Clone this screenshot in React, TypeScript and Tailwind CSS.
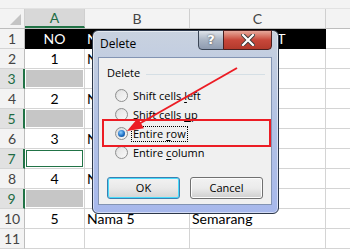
import React from "react";

type Row = { n: number; a?: string; b?: string; c?: string; kind?: "head" | "gray" | "active" | "plain" };

const rows: Row[] = [
  { n: 1, a: "NO", b: "NAMA", c: "ALAMAT", kind: "head" },
  { n: 2, a: "1", b: "Nama 1", c: "Jakarta" },
  { n: 3, kind: "gray" },
  { n: 4, a: "2", b: "Nama 2", c: "Bandung" },
  { n: 5, kind: "gray" },
  { n: 6, a: "3", b: "Nama 3", c: "Surabaya" },
  { n: 7, kind: "active" },
  { n: 8, a: "4", b: "Nama 4", c: "Malang" },
  { n: 9, kind: "gray" },
  { n: 10, a: "5", b: "Nama 5", c: "Semarang" },
  { n: 11, kind: "plain" },
];

function Radio({ checked }: { checked?: boolean }) {
  return (
    <div className="w-[13px] h-[13px] rounded-full border border-[#8e8f8f] bg-gradient-to-br from-[#d8d8d8] to-[#fbfbfb] flex items-center justify-center shrink-0">
      {checked ? (
        <div className="w-[7px] h-[7px] rounded-full bg-[radial-gradient(circle_at_40%_35%,#8fd0ff,#1f6fc4_55%,#0b3c7a)]" />
      ) : (
        <div className="w-[9px] h-[9px] rounded-full bg-gradient-to-br from-[#e4e4e4] to-[#f7f7f7]" />
      )}
    </div>
  );
}

function RadioRow({ children, checked, focus }: { children: React.ReactNode; checked?: boolean; focus?: boolean }) {
  return (
    <div className="flex items-center h-[19px] pl-[16px]">
      <Radio checked={checked} />
      <div className={`ml-[3px] px-[1px] leading-[14px] ${focus ? "border border-dotted border-black" : "border border-transparent"}`}>{children}</div>
    </div>
  );
}

export default function App() {
  return (
    <div className="relative w-[350px] h-[250px] overflow-hidden bg-white font-['Lato',sans-serif] text-[14px] text-black">
      <div className="h-[9px] bg-[#f3f3f3] border-b border-[#e2e2e2]" />
      {/* column header */}
      <div className="flex h-[20px] bg-[#f3f3f3] text-[14px] text-[#444] border-b border-[#bdbdbd]">
        <div className="relative w-[25px] border-r border-[#cfcfcf]">
          <div className="absolute right-[3px] bottom-[3px] w-0 h-0 border-l-[11px] border-l-transparent border-b-[11px] border-b-[#c4c4c4]" />
        </div>
        <div className="w-[60px] flex items-center justify-center bg-[#d8d8d8] text-[#1e6b44] border-b-2 border-[#217346] border-r border-r-[#cfcfcf]">A</div>
        <div className="w-[105px] flex items-center justify-center border-r border-[#cfcfcf]">B</div>
        <div className="w-[136px] flex items-center justify-center border-r border-[#cfcfcf]">C</div>
        <div className="flex-1" />
      </div>
      {rows.map((r) => {
        const sel = r.kind === "gray" || r.kind === "active";
        const head = r.kind === "head";
        return (
          <div key={r.n} className="flex h-[20px]">
            <div
              className={`w-[25px] flex items-center justify-center text-[14px] border-b border-[#d4d4d4] ${
                sel ? "bg-[#e1e1e1] text-[#1e6b44] border-r-2 border-r-[#217346]" : "bg-[#f3f3f3] text-[#444] border-r border-r-[#bdbdbd]"
              }`}
            >
              {r.n}
            </div>
            <div className={`w-[60px] flex items-center justify-center border-r border-b border-[#d4d4d4] ${head ? "bg-black text-white border-black" : ""}`}>
              {r.kind === "gray" ? (
                <div className="w-full h-full p-[1px] pr-[1px]">
                  <div className="w-full h-full bg-[#c6c6c6]" />
                </div>
              ) : r.kind === "active" ? (
                <div className="w-full h-full p-[1px]">
                  <div className="w-full h-full border border-[#217346]" />
                </div>
              ) : (
                r.a
              )}
            </div>
            <div className={`w-[105px] flex items-center pl-[2px] border-r border-b border-[#d4d4d4] ${head ? "bg-black text-white border-black" : ""}`}>{r.b}</div>
            <div className={`w-[136px] flex items-center border-r border-b border-[#d4d4d4] ${head ? "bg-black text-white border-black justify-center" : "pl-[2px]"}`}>{r.c}</div>
            <div className="flex-1 border-b border-[#d4d4d4]" />
          </div>
        );
      })}

      {/* Dialog */}
      <div className="absolute left-[92px] top-[30px] w-[187px] h-[184px] rounded-[6px] border border-[#2b3648] bg-gradient-to-b from-[#c9d2df] via-[#b3c2e4] to-[#a7b8ec] shadow-[0_0_0_1px_rgba(255,255,255,0.5)_inset] font-['Open_Sans',sans-serif] text-[11px] text-black">
        <div className="h-[26px] flex items-center pl-[7px] text-[12px] text-black">Delete</div>
        {/* title buttons */}
        <div className="absolute top-[-1px] right-[6px] flex">
          <div className="w-[26px] h-[20px] rounded-bl-[4px] border border-[#3b4656] bg-gradient-to-b from-[#dfe4ea] via-[#aab5c4] to-[#8e9bb0] flex items-center justify-center text-white font-bold text-[13px] font-['DejaVu_Sans',sans-serif] [text-shadow:0_0_2px_#333]">
            ?
          </div>
          <div className="w-[49px] h-[20px] -ml-px rounded-br-[4px] border border-[#4a1f1f] bg-gradient-to-b from-[#e6a89b] via-[#c8473a] to-[#b33a2c] flex items-center justify-center">
            <svg width="14" height="12" viewBox="0 0 14 12">
              <path d="M2 1 L12 11 M12 1 L2 11" stroke="#3a3a3a" strokeWidth="4" strokeLinecap="square" />
              <path d="M2 1 L12 11 M12 1 L2 11" stroke="#ffffff" strokeWidth="2.2" strokeLinecap="square" />
            </svg>
          </div>
        </div>
        {/* client */}
        <div className="absolute left-[5px] right-[6px] top-[26px] bottom-[8px] bg-[#f0f0f0] border border-[#8394b3]">
          <div className="flex items-center h-[14px] mt-[8px] pl-[8px]">
            <span className="leading-[14px]">Delete</span>
            <div className="ml-[6px] mr-[6px] flex-1 h-px bg-[#d5dfe5] mt-[2px]" />
          </div>
          <div className="mt-[6px] flex flex-col">
            <RadioRow>
              Shift cells <u className="underline-offset-2">l</u>eft
            </RadioRow>
            <RadioRow>
              Shift cells <u className="underline-offset-2">u</u>p
            </RadioRow>
            <RadioRow checked focus>
              Entire <u className="underline-offset-2">r</u>ow
            </RadioRow>
            <RadioRow>
              Entire <u className="underline-offset-2">c</u>olumn
            </RadioRow>
          </div>
          <div className="flex mt-[15px] pl-[8px] gap-[10px]">
            <div className="w-[73px] h-[22px] rounded-[3px] border border-[#3c7fb1] shadow-[inset_0_0_0_1px_#48dbfb] bg-gradient-to-b from-[#f2f2f2] via-[#e9e9e9] to-[#d4d4d4] flex items-center justify-center">
              OK
            </div>
            <div className="w-[73px] h-[22px] rounded-[3px] border border-[#707070] shadow-[inset_0_0_0_1px_#fcfcfc] bg-gradient-to-b from-[#f2f2f2] via-[#ebebeb] to-[#cfcfcf] flex items-center justify-center">
              Cancel
            </div>
          </div>
        </div>
      </div>

      {/* Red highlight rectangle */}
      <div className="absolute left-[102px] top-[119px] w-[169px] h-[28px] border-2 border-[#ec1c24]" />

      {/* Arrow */}
      <svg className="absolute left-0 top-0 pointer-events-none" width="350" height="250" viewBox="0 0 350 250">
        <line x1="237" y1="68" x2="138" y2="124.5" stroke="#ec1c24" strokeWidth="2" />
        <polygon points="127,131 143.9,128.3 137.9,117.9" fill="#ec1c24" />
      </svg>
    </div>
  );
}
